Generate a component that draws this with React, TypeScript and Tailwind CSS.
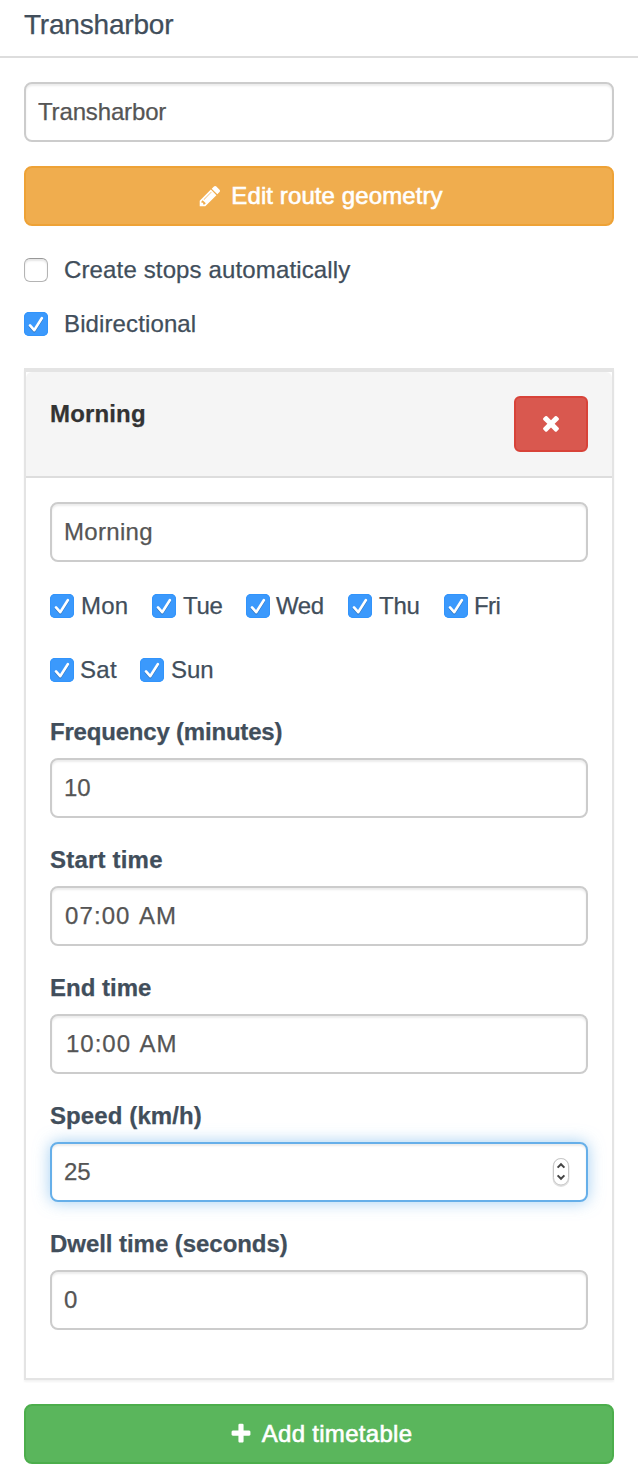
import React from "react";

const inputBase =
  "block h-[60px] w-full rounded-[8px] border-2 bg-white px-3 text-[24px] leading-[34px] text-[#555] outline-none";
const inputIdle =
  "border-[#ccc] shadow-[inset_0_2px_2px_rgba(0,0,0,0.075)]";
const inputFocused =
  "border-[#66afe9] shadow-[inset_0_2px_2px_rgba(0,0,0,0.075),0_0_16px_rgba(102,175,233,0.6)]";

function Icon({ d, className }: { d: string; className: string }) {
  return (
    <svg viewBox="0 0 1792 1792" fill="currentColor" className={`size-6 shrink-0 ${className}`} aria-hidden="true">
      <path d={d} />
    </svg>
  );
}

const PENCIL =
  "M491 1536l91-91-235-235-91 91v107h128v128h107zm523-928q0-22-22-22-10 0-17 7l-542 542q-7 7-7 17 0 22 22 22 10 0 17-7l542-542q7-7 7-17zm-54-192l416 416-832 832h-416v-416zm683 96q0 53-37 90l-166 166-416-416 166-165q36-38 90-38 53 0 91 38l235 234q37 39 37 91z";
const PLUS =
  "M1600 736v192q0 40-28 68t-68 28h-416v416q0 40-28 68t-68 28h-192q-40 0-68-28t-28-68v-416h-416q-40 0-68-28t-28-68v-192q0-40 28-68t68-28h416v-416q0-40 28-68t68-28h192q40 0 68 28t28 68v416h416q40 0 68 28t28 68z";
const TIMES =
  "M1490 1322q0 40-28 68l-136 136q-28 28-68 28t-68-28l-294-294-294 294q-28 28-68 28t-68-28l-136-136q-28-28-28-68t28-68l294-294-294-294q-28-28-28-68t28-68l136-136q28-28 68-28t68 28l294 294 294-294q28-28 68-28t68 28l136 136q28 28 28 68t-28 68l-294 294 294 294q28 28 28 68z";

function Check({ checked }: { checked: boolean }) {
  if (!checked) {
    return (
      <span className="size-6 shrink-0 rounded-[6px] border border-[#b4b4b4] border-t-[#989898] bg-white shadow-[inset_0_2px_2px_rgba(0,0,0,0.1)]" />
    );
  }
  return (
    <span className="size-6 shrink-0 rounded-[5px] bg-[#3b99fc] shadow-[inset_0_0_0_1px_#3294fb]">
      <svg viewBox="0 0 24 24" fill="none" className="size-6 drop-shadow-[0_1px_0.5px_rgba(0,0,0,0.25)]">
        <path d="M6 13.4l4.2 4.8L17.8 6.2" stroke="#fff" strokeWidth="2.6" strokeLinecap="round" strokeLinejoin="round" />
      </svg>
    </span>
  );
}

function Day({ name, width, text }: { name: string; width: string; text: string }) {
  return (
    <label className={`flex h-6 items-center ${width}`}>
      <Check checked />
      <span className={`text-[24px] leading-6 ${text}`}>{name}</span>
    </label>
  );
}

function Stepper() {
  return (
    <svg viewBox="0 0 18 30" fill="none" className="absolute top-[15px] right-[18px] h-[30px] w-[18px]">
      <rect x="1.5" y="2" width="15" height="27" rx="7.5" stroke="#000" strokeOpacity="0.12" strokeWidth="2" />
      <rect x="1.5" y="1.5" width="15" height="26.5" rx="7.5" fill="#fff" stroke="#c8c8c8" />
      <path d="M5.6 10.6L9 7.2l3.4 3.4M5.6 18.4L9 21.8l3.4-3.4" stroke="#444" strokeWidth="2" />
    </svg>
  );
}

interface FieldProps {
  label: string;
  value: string;
  labelText: string;
  text?: string;
  focused?: boolean;
}

function Field({ label, value, labelText, text = "", focused = false }: FieldProps) {
  return (
    <label className="block">
      <span className={`mb-[10px] block text-[24px] leading-8 font-bold ${labelText}`}>{label}</span>
      <span className="relative block">
        <input readOnly value={value} className={`${inputBase} ${focused ? inputFocused : inputIdle} ${text}`} />
        {focused && <Stepper />}
      </span>
    </label>
  );
}

export default function App() {
  return (
    <div className="min-h-[1484px] w-full bg-white font-['Liberation_Sans',Arial,sans-serif] text-[#414e5b] [-webkit-text-stroke:0.25px_currentColor]">
      <header className="h-[58px] border-b-2 border-[#ddd] px-6 pt-[7px]">
        <h1 className="text-[28px] leading-[36px] tracking-[-0.2px]">Transharbor</h1>
      </header>

      <main className="flex flex-col px-6 pt-6">
        <input readOnly value="Transharbor" className={`${inputBase} ${inputIdle} tracking-[-0.15px]`} />

        <button className="mt-6 flex h-[60px] items-center justify-center rounded-[8px] border-2 border-[#eea236] bg-[#f0ad4e] pl-[3px] text-[24px] text-white">
          <Icon d={PENCIL} className="mr-[9px]" />
          <span className="tracking-[0.1px] [-webkit-text-stroke:0.6px_white]">Edit route geometry</span>
        </button>

        <label className="mt-8 flex h-6 items-center gap-4 text-[24px] leading-6">
          <Check checked={false} />
          <span className="tracking-[0.14px]">Create stops automatically</span>
        </label>
        <label className="mt-[30px] flex h-6 items-center gap-4 text-[24px] leading-6">
          <Check checked />
          <span className="tracking-[0.12px]">Bidirectional</span>
        </label>

        <section className="mt-8 h-[1012px] border-2 border-t-4 border-[#e4e4e4] bg-white shadow-[0_2px_2px_rgba(0,0,0,0.05)]">
          <div className="flex h-[106px] justify-between rounded-t-[6px] border-b-2 border-[#ddd] bg-[#f5f5f5] px-6 pt-6">
            <h2 className="text-[24px] leading-9 font-bold tracking-[0.15px] text-[#333]">Morning</h2>
            <button className="flex h-14 w-[74px] items-center justify-center rounded-[6px] border-2 border-[#d84339] bg-[#d9584f] pb-[2px] text-white">
              <Icon d={TIMES} className="" />
            </button>
          </div>

          <div className="px-6 pt-6">
            <input readOnly value="Morning" className={`${inputBase} ${inputIdle} tracking-[0.3px]`} />

            <div className="mt-8 flex">
              <Day name="Mon" width="w-[102px]" text="pl-[7px] tracking-[0.2px]" />
              <Day name="Tue" width="w-[94px]" text="pl-[7px] tracking-[-0.3px]" />
              <Day name="Wed" width="w-[102px]" text="pl-[6px] tracking-[-0.4px]" />
              <Day name="Thu" width="w-24" text="pl-[7px] tracking-[-0.2px]" />
              <Day name="Fri" width="w-20" text="pl-[6px] tracking-[-0.6px]" />
            </div>
            <div className="mt-10 flex">
              <Day name="Sat" width="w-[90px]" text="pl-[6px] tracking-[0.3px]" />
              <Day name="Sun" width="w-20" text="pl-[7px]" />
            </div>

            <div className="mt-[34px] flex flex-col gap-[26px]">
              <Field label="Frequency (minutes)" value="10" labelText="tracking-[-0.2px]" />
              <Field
                label="Start time"
                value="07:00 AM"
                labelText="tracking-[0.2px]"
                text="pl-[13px] tracking-[1.1px] [word-spacing:2px]"
              />
              <Field
                label="End time"
                value="10:00 AM"
                labelText=""
                text="pl-[14px] tracking-[1px] [word-spacing:2px]"
              />
              <Field label="Speed (km/h)" value="25" labelText="tracking-[0.1px]" focused />
              <Field label="Dwell time (seconds)" value="0" labelText="tracking-[-0.05px]" />
            </div>
          </div>
        </section>

        <button className="mt-6 flex h-[60px] items-center justify-center rounded-[8px] border-2 border-[#4cae4c] bg-[#5ab65c] pl-[3px] text-[24px] text-white">
          <Icon d={PLUS} className="mr-[9px]" />
          <span className="tracking-[0.3px] [-webkit-text-stroke:0.6px_white]">Add timetable</span>
        </button>
      </main>
    </div>
  );
}
